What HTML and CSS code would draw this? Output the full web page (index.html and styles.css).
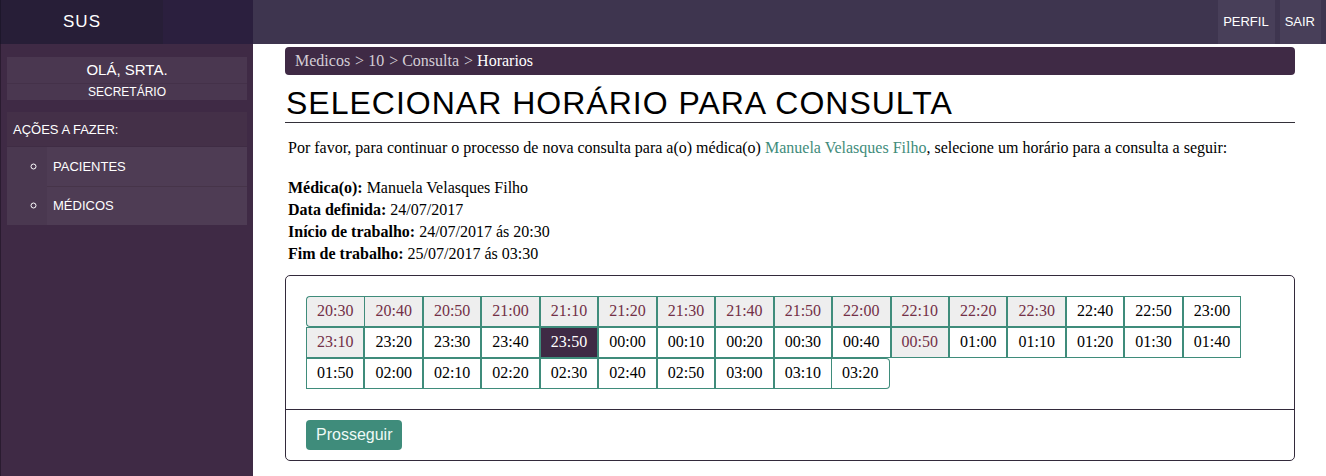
FILE: index.html
```html
<!DOCTYPE html>
<html lang="pt-BR">
<head>
<meta charset="utf-8">
<meta name="viewport" content="width=device-width, initial-scale=1">
<title>Selecionar horário para consulta</title>
<link rel="stylesheet" href="styles.css">
</head>
<body>
<header class="topbar">
  <div class="brand"><a class="brand-link" href="#">SUS</a></div>
  <nav class="account">
    <a class="account-link" href="#">PERFIL</a>
    <a class="account-link" href="#">SAIR</a>
  </nav>
</header>
<div class="layout">
  <aside class="sidebar">
    <div class="greeting">
      <div class="greeting-name">OLÁ, SRTA.</div>
      <div class="greeting-role">SECRETÁRIO</div>
    </div>
    <nav class="actions">
      <div class="actions-title">AÇÕES A FAZER:</div>
      <ul class="actions-list">
        <li class="actions-item"><a class="actions-link" href="#">PACIENTES</a></li>
        <li class="actions-item"><a class="actions-link" href="#">MÉDICOS</a></li>
      </ul>
    </nav>
  </aside>
  <main class="content">
    <nav class="breadcrumb"><a href="#">Medicos</a><span class="sep">&gt;</span><a href="#">10</a><span class="sep">&gt;</span><a href="#">Consulta</a><span class="sep">&gt;</span><span class="current">Horarios</span></nav>
    <h1 class="title">SELECIONAR HORÁRIO PARA CONSULTA</h1>
    <p class="intro">Por favor, para continuar o processo de nova consulta para a(o) médica(o) <a class="doctor" href="#">Manuela Velasques Filho</a>, selecione um horário para a consulta a seguir:</p>
    <div class="details">
      <div><strong>Médica(o):</strong> Manuela Velasques Filho</div>
      <div><strong>Data definida:</strong> 24/07/2017</div>
      <div><strong>Início de trabalho:</strong> 24/07/2017 ás 20:30</div>
      <div><strong>Fim de trabalho:</strong> 25/07/2017 ás 03:30</div>
    </div>
    <form class="panel">
      <div class="slots">
        <label class="slot"><input type="radio" name="slot" disabled><span>20:30</span></label>
        <label class="slot"><input type="radio" name="slot" disabled><span>20:40</span></label>
        <label class="slot"><input type="radio" name="slot" disabled><span>20:50</span></label>
        <label class="slot"><input type="radio" name="slot" disabled><span>21:00</span></label>
        <label class="slot"><input type="radio" name="slot" disabled><span>21:10</span></label>
        <label class="slot"><input type="radio" name="slot" disabled><span>21:20</span></label>
        <label class="slot"><input type="radio" name="slot" disabled><span>21:30</span></label>
        <label class="slot"><input type="radio" name="slot" disabled><span>21:40</span></label>
        <label class="slot"><input type="radio" name="slot" disabled><span>21:50</span></label>
        <label class="slot"><input type="radio" name="slot" disabled><span>22:00</span></label>
        <label class="slot"><input type="radio" name="slot" disabled><span>22:10</span></label>
        <label class="slot"><input type="radio" name="slot" disabled><span>22:20</span></label>
        <label class="slot"><input type="radio" name="slot" disabled><span>22:30</span></label>
        <label class="slot"><input type="radio" name="slot"><span>22:40</span></label>
        <label class="slot"><input type="radio" name="slot"><span>22:50</span></label>
        <label class="slot"><input type="radio" name="slot"><span>23:00</span></label>
        <label class="slot"><input type="radio" name="slot" disabled><span>23:10</span></label>
        <label class="slot"><input type="radio" name="slot"><span>23:20</span></label>
        <label class="slot"><input type="radio" name="slot"><span>23:30</span></label>
        <label class="slot"><input type="radio" name="slot"><span>23:40</span></label>
        <label class="slot"><input type="radio" name="slot" checked><span>23:50</span></label>
        <label class="slot"><input type="radio" name="slot"><span>00:00</span></label>
        <label class="slot"><input type="radio" name="slot"><span>00:10</span></label>
        <label class="slot"><input type="radio" name="slot"><span>00:20</span></label>
        <label class="slot"><input type="radio" name="slot"><span>00:30</span></label>
        <label class="slot"><input type="radio" name="slot"><span>00:40</span></label>
        <label class="slot"><input type="radio" name="slot" disabled><span>00:50</span></label>
        <label class="slot"><input type="radio" name="slot"><span>01:00</span></label>
        <label class="slot"><input type="radio" name="slot"><span>01:10</span></label>
        <label class="slot"><input type="radio" name="slot"><span>01:20</span></label>
        <label class="slot"><input type="radio" name="slot"><span>01:30</span></label>
        <label class="slot"><input type="radio" name="slot"><span>01:40</span></label>
        <label class="slot"><input type="radio" name="slot"><span>01:50</span></label>
        <label class="slot"><input type="radio" name="slot"><span>02:00</span></label>
        <label class="slot"><input type="radio" name="slot"><span>02:10</span></label>
        <label class="slot"><input type="radio" name="slot"><span>02:20</span></label>
        <label class="slot"><input type="radio" name="slot"><span>02:30</span></label>
        <label class="slot"><input type="radio" name="slot"><span>02:40</span></label>
        <label class="slot"><input type="radio" name="slot"><span>02:50</span></label>
        <label class="slot"><input type="radio" name="slot"><span>03:00</span></label>
        <label class="slot"><input type="radio" name="slot"><span>03:10</span></label>
        <label class="slot"><input type="radio" name="slot"><span>03:20</span></label>
      </div>
      <div class="panel-footer"><button class="submit" type="button">Prosseguir</button></div>
    </form>
  </main>
</div>
</body>
</html>
```
FILE: styles.css
```css
* { box-sizing: border-box; }

body {
  margin: 0;
  min-height: 100vh;
  display: flex;
  flex-direction: column;
  background: #fff;
  color: #000;
  font: 16px/22px "Liberation Serif", serif;
}

a { color: inherit; text-decoration: none; }

.topbar,
.sidebar {
  color: #fff;
  font-family: "Liberation Sans", sans-serif;
  font-size: 13px;
}

.topbar {
  display: flex;
  justify-content: space-between;
  height: 44px;
  background: #3e354f;
}

.brand {
  display: flex;
  width: 253px;
  border-left: 1px solid #1d172b;
  background: #2b1f3e;
}

.brand-link {
  width: 162px;
  background: #271e37;
  font-size: 17px;
  line-height: 44px;
  letter-spacing: 1px;
  text-align: center;
}

.account { display: flex; gap: 5px; padding-right: 5px; }

.account-link {
  padding: 0 6px 0 5px;
  background: #483f59;
  line-height: 44px;
}

.layout { display: flex; flex: 1; }

.sidebar {
  flex: 0 0 253px;
  padding: 13px 6px;
  border-left: 1px solid #2a1b30;
  background: #3f2a45;
}

.greeting {
  margin-bottom: 12px;
  background: #4a3750;
  text-align: center;
}

.greeting-name {
  border-bottom: 1px solid #443149;
  font-size: 15px;
  line-height: 26px;
}

.greeting-role { font-size: 12px; line-height: 16px; }

.actions-title {
  padding-left: 6px;
  background: #443048;
  box-shadow: inset 0 -1px #3f2c44;
  line-height: 35px;
}

.actions-list {
  margin: 0;
  padding-left: 40px;
  background: #4a3850;
  list-style: circle;
}

.actions-item { background: #4e3c54; font-size: 16px; line-height: 38px; }
.actions-item + .actions-item { box-shadow: inset 0 1px #463449; }
.actions-link { display: block; padding-left: 6px; font-size: 13px; }

.content { flex: 1; min-width: 0; padding: 3px 31px 15px 32px; }

.breadcrumb {
  display: flex;
  gap: 4px;
  padding: 3px 10px;
  border-radius: 4px;
  background: #3f2a45;
  color: #d3cdd5;
}

.sep { margin-left: 1px; }
.current { color: #fff; }

.title {
  margin: 9px 0 14px;
  padding-left: 1px;
  border-bottom: 1px solid #333039;
  font: 32px/38px "Liberation Sans", sans-serif;
  letter-spacing: 1px;
}

.intro { margin: 0 3px 18px; }
.doctor { color: #3f8c7b; }
.details { margin: 0 3px 10px; }

.panel { border: 1px solid #332a3b; border-radius: 5px; }

.slots { display: flex; flex-wrap: wrap; padding: 20px; }

.slot { position: relative; cursor: pointer; }

.slot input {
  position: absolute;
  inset: 0;
  margin: 0;
  width: 100%;
  height: 100%;
  opacity: 0;
}

.slot span {
  display: block;
  padding: 3px 10px 4px;
  border: 1px solid #3f8c7b;
}

.slot:first-child span { padding-right: 11px; border-right: 0; border-radius: 4px 0 0 4px; }
.slot:last-child span { border-left: 0; border-radius: 0 4px 4px 0; }
.slot input:disabled + span { background: #eee; color: #733047; }
.slot input:checked + span { background: #3f2a45; color: #fff; }

.panel-footer { padding: 10px 20px; border-top: 1px solid #332a3b; }

.submit {
  display: block;
  padding: 4px 10px;
  border: 0;
  border-radius: 4px;
  background: #3f8c7b;
  color: #eefaf6;
  font: 16px/22px "Liberation Sans", sans-serif;
}
```
